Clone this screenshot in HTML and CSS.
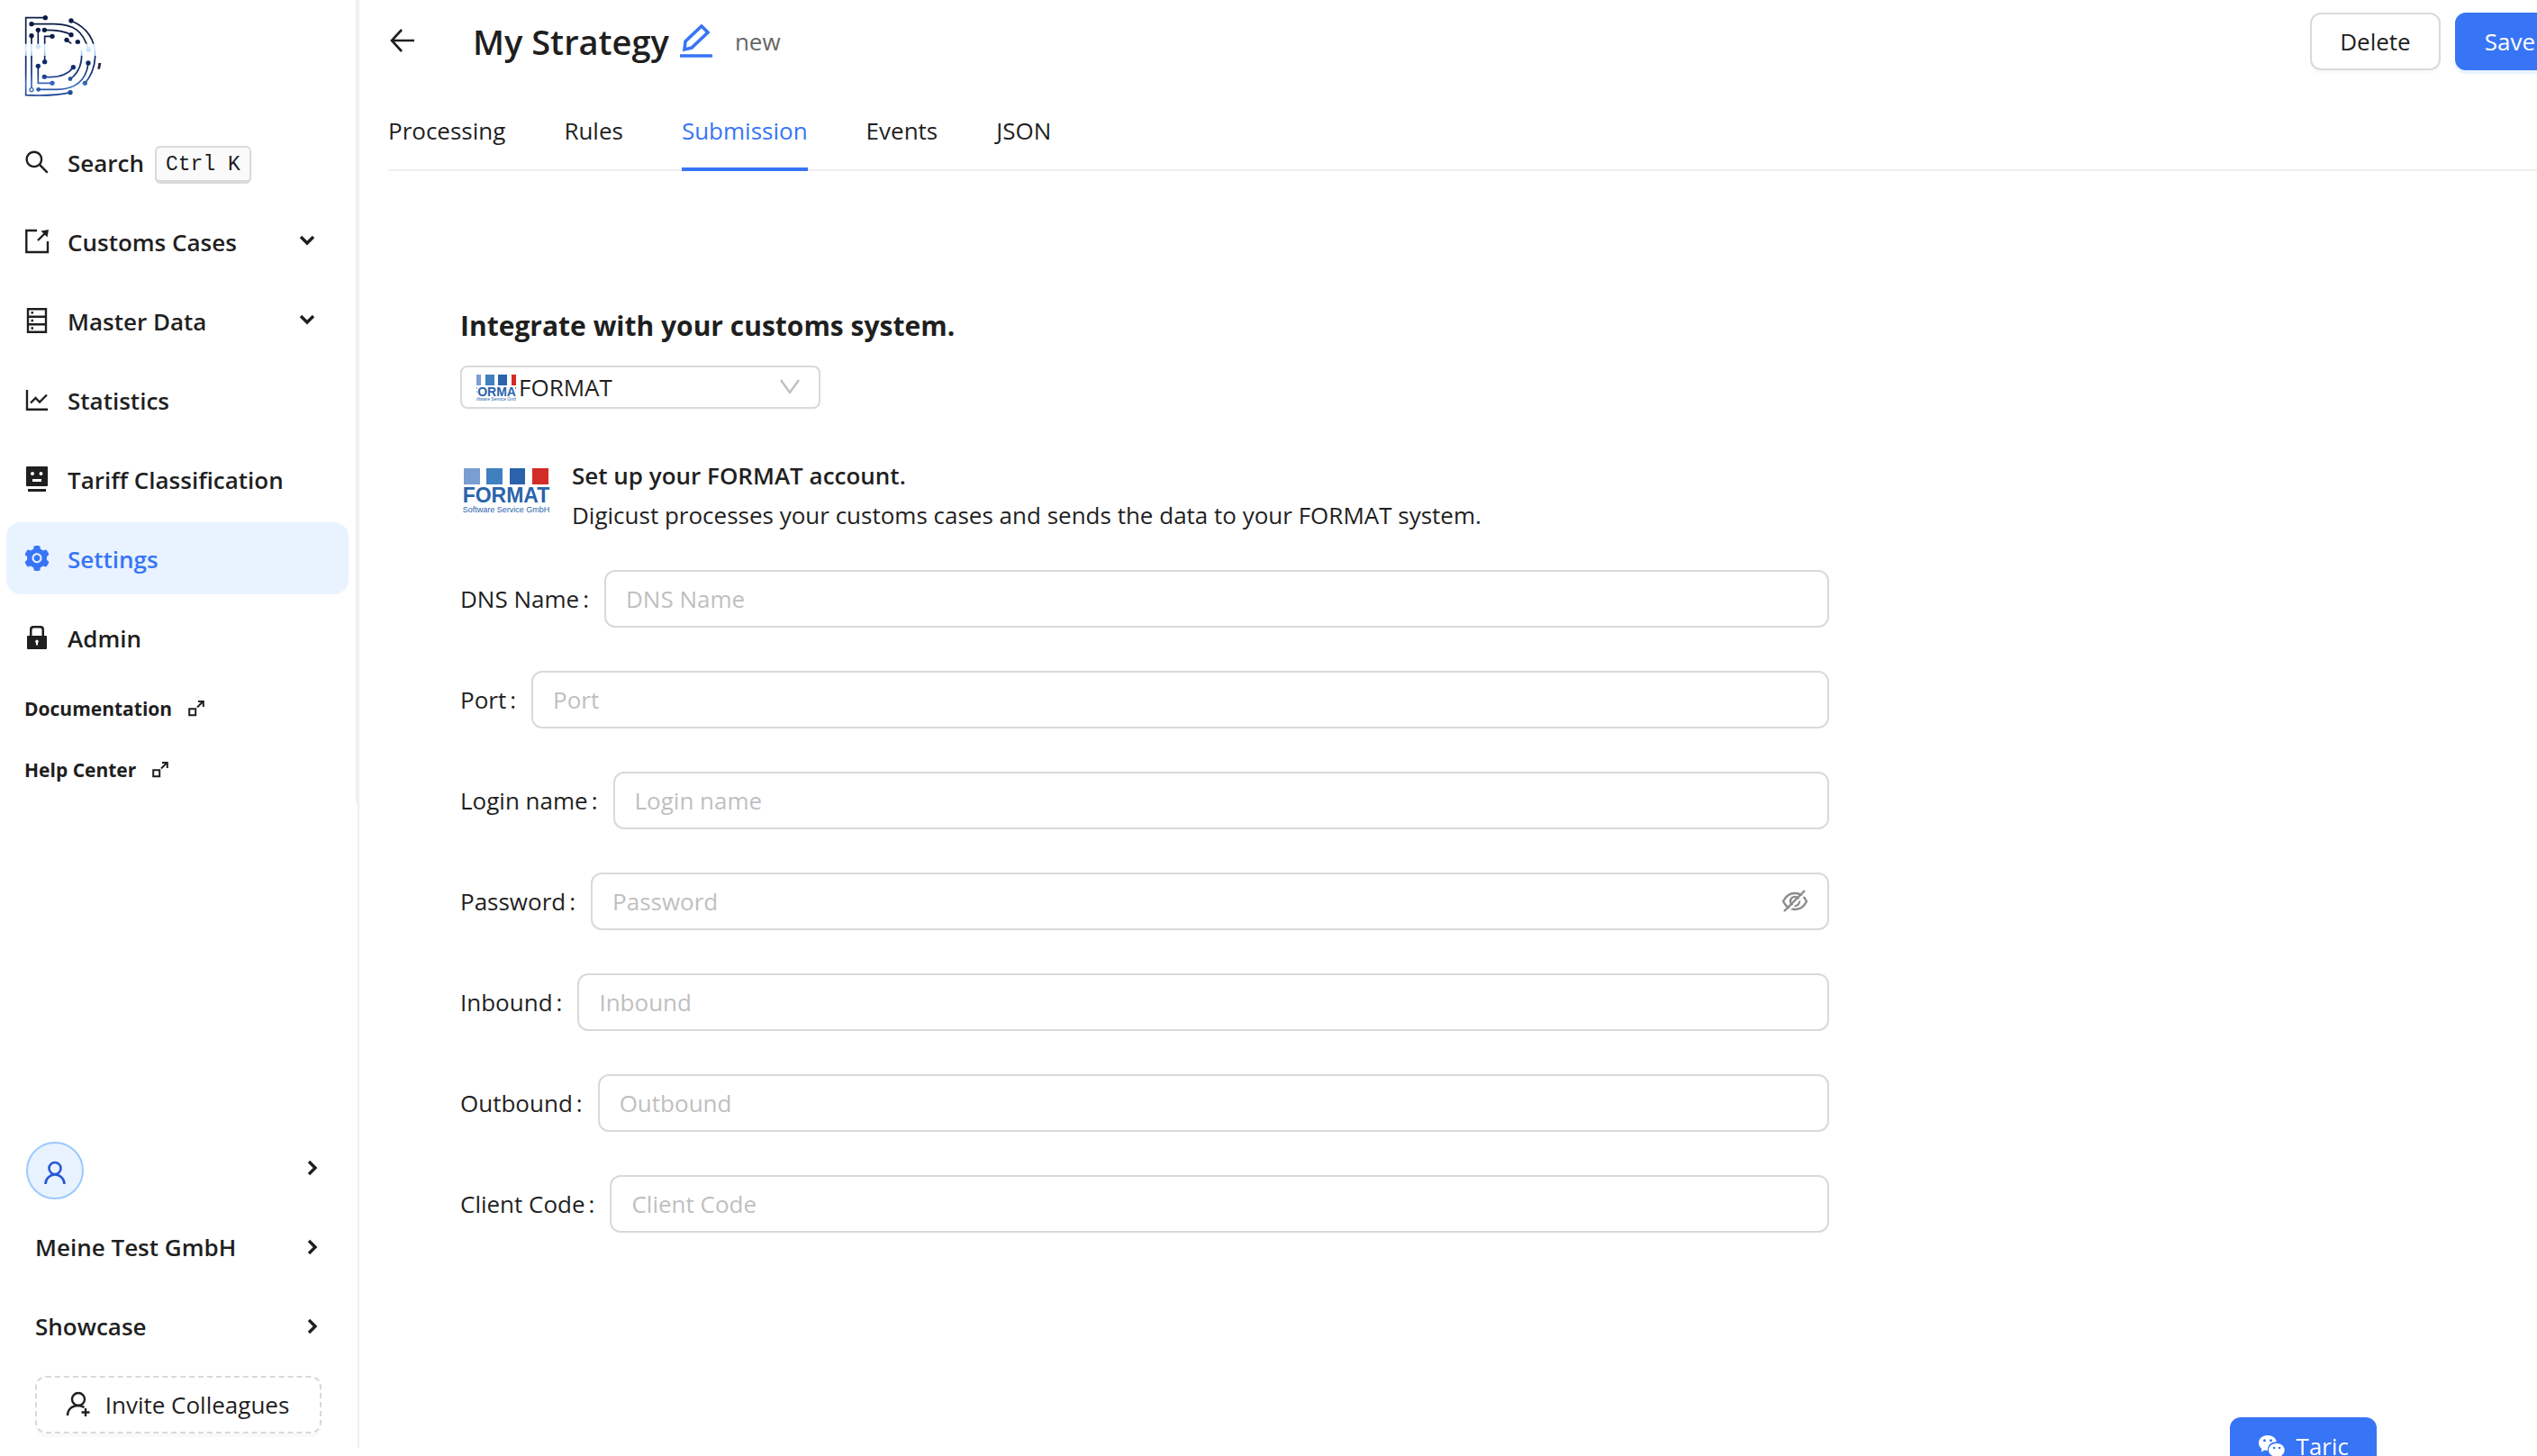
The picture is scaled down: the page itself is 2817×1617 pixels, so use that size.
FILE: index.html
```html
<!DOCTYPE html>
<html lang="en">
<head>
<meta charset="utf-8">
<title>My Strategy</title>
<link rel="stylesheet" href="styles.css">
</head>
<body>
<div class="layout">
  <aside class="sider">
    <div class="sider-top">
      <svg class="brand" viewBox="0 0 360 345" role="img" aria-label="Digicust">
        <defs>
          <linearGradient id="ink" gradientUnits="userSpaceOnUse" x1="0" y1="40" x2="0" y2="305">
            <stop offset="0" stop-color="#0b1b42"/><stop offset=".34" stop-color="#0a1c48"/>
            <stop offset=".345" stop-color="#c4e0fb"/><stop offset=".41" stop-color="#cfe8ff"/><stop offset=".49" stop-color="#8fc0f2"/>
            <stop offset=".5" stop-color="#0c2360"/><stop offset=".72" stop-color="#15357e"/>
            <stop offset=".85" stop-color="#3a6cc0"/><stop offset="1" stop-color="#173f8c"/>
          </linearGradient>
        </defs>
        <g fill="none" stroke="url(#ink)" stroke-width="5">
          <path d="M121 44H56V302C100 304 160 304 204 293"/>
          <path d="M75 65H150C215 66 245 85 265 150"/>
          <path d="M207 54C262 78 288 120 287 175C285 210 272 240 253 262"/>
          <path d="M75 104V284M97 85V140"/>
          <path d="M118 85C150 85 185 87 207 101"/>
          <path d="M144 106H119V190"/>
          <path d="M97 205V262H144"/>
          <path d="M118 241C165 245 195 235 214 209"/>
          <path d="M241 150C246 195 235 225 205 248"/>
          <path d="M264 195C258 250 225 285 150 283H98"/>
          <path d="M192 118L208 131"/>
        </g>
        <g fill="url(#ink)">
          <circle cx="121" cy="44" r="8"/><circle cx="75" cy="65" r="8"/><circle cx="97" cy="85" r="8"/><circle cx="118" cy="85" r="8"/>
          <circle cx="207" cy="54" r="8"/><circle cx="207" cy="101" r="8"/><circle cx="144" cy="106" r="8"/><circle cx="75" cy="104" r="8"/>
          <circle cx="192" cy="118" r="8"/><circle cx="229" cy="125" r="8"/><circle cx="97" cy="141" r="8"/><circle cx="265" cy="150" r="8"/>
          <circle cx="119" cy="191" r="8"/><circle cx="97" cy="205" r="8"/><circle cx="214" cy="209" r="8"/><circle cx="264" cy="195" r="8"/>
          <circle cx="118" cy="241" r="8"/><circle cx="144" cy="262" r="8"/><circle cx="204" cy="248" r="7"/><circle cx="253" cy="262" r="8"/>
          <circle cx="98" cy="283" r="7"/><circle cx="204" cy="293" r="8"/>
        </g>
        <circle cx="75" cy="284" r="6" fill="#fff" stroke="#3a6cc0" stroke-width="4"/>
        <path d="M298 195h9l-4 20h-8z" fill="#222a44"/>
      </svg>
      <nav class="menu">
        <a class="item" href="#"><svg class="ico" viewBox="0 0 1024 1024"><path d="M909.6 854.5L649.9 594.8C690.2 542.7 712 479 712 412c0-80.2-31.3-155.4-87.9-212.1-56.6-56.7-132-87.9-212.1-87.9s-155.5 31.3-212.1 87.9C143.2 256.5 112 331.8 112 412c0 80.1 31.3 155.5 87.9 212.1C256.5 680.8 331.8 712 412 712c67 0 130.6-21.8 182.7-62l259.7 259.6a8.2 8.2 0 0011.6 0l43.6-43.5a8.2 8.2 0 000-11.6zM570.4 570.4C528 612.7 471.8 636 412 636s-116-23.3-158.4-65.6C211.3 528 188 471.8 188 412s23.3-116.1 65.6-158.4C296 211.2 352.2 188 412 188s116.1 23.2 158.4 65.6S636 352.2 636 412s-23.3 116.1-65.6 158.4z"/></svg><span>Search</span><kbd>Ctrl K</kbd></a>
        <a class="item" href="#"><svg class="ico line" viewBox="0 0 32 32"><path d="M16 4H4.300V28H28V16M17 15L26 6"/><path class="solid" d="M20.500 4.500L29 3l-1.500 8.500z"/></svg><span>Customs Cases</span><svg class="chev" viewBox="0 0 20 20"><path d="M3 5l7 7 7-7"/></svg></a>
        <a class="item" href="#"><svg class="ico line" viewBox="0 0 32 32"><path d="M6 3.200h20v25.600H6zM6 11.700h20M6 20.300h20"/><path class="solid" d="M9.500 6h2.500v2.500H9.500zM9.500 14.700h2.500v2.500H9.500zM9.500 23.200h2.500v2.500H9.500z"/></svg><span>Master Data</span><svg class="chev" viewBox="0 0 20 20"><path d="M3 5l7 7 7-7"/></svg></a>
        <a class="item" href="#"><svg class="ico line" viewBox="0 0 32 32"><path d="M5 5v21.700h23M9 19.500l5.500-5.500 4.500 4.500 8-8"/></svg><span>Statistics</span></a>
        <a class="item" href="#"><svg class="ico" viewBox="0 0 32 32"><path fill-rule="evenodd" d="M5 2h22a1 1 0 011 1v20a1 1 0 01-1 1H5a1 1 0 01-1-1V3a1 1 0 011-1zM9 10a2 2 0 104 0 2 2 0 10-4 0zM18.500 10a2 2 0 104 0 2 2 0 10-4 0zM11 16v3h10v-3zM6 27h20v3H6z"/></svg><span>Tariff Classification</span></a>
        <a class="item active" href="#" aria-current="page"><svg class="ico" viewBox="0 0 1024 1024"><path d="M512.5 390.600c-29.900 0-57.900 11.600-79.100 32.800-21.100 21.200-32.800 49.200-32.800 79.100 0 29.900 11.700 57.900 32.800 79.100 21.200 21.100 49.200 32.800 79.100 32.800 29.900 0 57.900-11.700 79.100-32.800 21.100-21.200 32.800-49.200 32.800-79.100 0-29.900-11.700-57.900-32.800-79.100a110.960 110.960 0 00-79.100-32.800zm412.300 235.500l-65.400-55.900c3.100-19 4.700-38.400 4.700-57.700s-1.600-38.800-4.700-57.700l65.400-55.900a32.030 32.030 0 009.300-35.200l-.9-2.600a442.500 442.500 0 00-79.600-137.700l-1.800-2.100a32.120 32.120 0 00-35.100-9.500l-81.200 28.900c-30-24.600-63.400-44-99.600-57.500l-15.700-84.900a32.050 32.050 0 00-25.800-25.700l-2.700-.5c-52-9.400-106.800-9.400-158.800 0l-2.700.5a32.050 32.050 0 00-25.800 25.700l-15.800 85.300a353.440 353.440 0 00-98.900 57.300l-81.800-29.100a32 32 0 00-35.100 9.500l-1.800 2.100a445.930 445.930 0 00-79.600 137.700l-.9 2.600c-4.500 12.500-.8 26.500 9.300 35.200l66.200 56.500c-3.100 18.800-4.600 38-4.600 57 0 19.200 1.500 38.400 4.600 57l-66 56.500a32.030 32.030 0 00-9.300 35.200l.9 2.600c18.100 50.300 44.800 96.800 79.600 137.700l1.800 2.100a32.120 32.120 0 0035.100 9.500l81.800-29.100c29.800 24.500 63 43.900 98.900 57.300l15.800 85.300a32.050 32.050 0 0025.800 25.700l2.700.5a448.270 448.270 0 00158.800 0l2.700-.5a32.050 32.050 0 0025.800-25.700l15.700-84.900c36.200-13.600 69.600-32.900 99.600-57.500l81.200 28.900a32 32 0 0035.100-9.500l1.800-2.100c34.800-41.100 61.500-87.400 79.600-137.700l.9-2.600c4.300-12.400.6-26.300-9.500-35zm-412.300 52.200c-97.100 0-175.800-78.700-175.800-175.800s78.700-175.800 175.800-175.800 175.800 78.700 175.800 175.800-78.700 175.800-175.800 175.800z"/></svg><span>Settings</span></a>
        <a class="item" href="#"><svg class="ico" viewBox="0 0 32 32"><path fill-rule="evenodd" d="M26 14h-2V7a4 4 0 00-4-4h-8a4 4 0 00-4 4v7H6a1 1 0 00-1 1v13a1 1 0 001 1h20a1 1 0 001-1V15a1 1 0 00-1-1zM17 22v2.500h-2V22a1.800 1.800 0 112 0zM21.500 14h-11V7.500a2 2 0 012-2h7a2 2 0 012 2z"/></svg><span>Admin</span></a>
      </nav>
      <nav class="links">
        <a class="link" href="#"><span>Documentation</span><svg class="ext" viewBox="0 0 20 20"><path d="M2.200 10.200h7v7h-7zM11 8.500L17 2.500M12 2h5.800v6"/></svg></a>
        <a class="link" href="#"><span>Help Center</span><svg class="ext" viewBox="0 0 20 20"><path d="M2.200 10.200h7v7h-7zM11 8.500L17 2.500M12 2h5.800v6"/></svg></a>
      </nav>
    </div>
    <div class="sider-bottom">
      <a class="row row-user" href="#" aria-label="Account"><span class="avatar"><svg viewBox="0 0 32 32"><circle cx="16" cy="9.500" r="6.500"/><path d="M5.500 27a10.500 10.500 0 0121 0"/></svg></span><svg class="chev" viewBox="0 0 20 20"><path d="M6 3l7 7-7 7"/></svg></a>
      <a class="row" href="#"><span>Meine Test GmbH</span><svg class="chev" viewBox="0 0 20 20"><path d="M6 3l7 7-7 7"/></svg></a>
      <a class="row" href="#"><span>Showcase</span><svg class="chev" viewBox="0 0 20 20"><path d="M6 3l7 7-7 7"/></svg></a>
      <button class="btn btn-dashed" type="button"><svg class="ico line" viewBox="0 0 32 32"><circle cx="16" cy="10" r="7"/><path d="M4 28c0-6 4-11 12-11 3 0 5 1 6.500 2M24 20v9M19.500 24.500h9"/></svg>Invite Colleagues</button>
    </div>
  </aside>

  <main class="main">
    <header class="header">
      <button class="back" type="button" aria-label="Back"><svg viewBox="0 0 32 32"><path d="M29 15H4M15 3L4 15l11 12"/></svg></button>
      <h1>My Strategy</h1>
      <button class="edit" type="button" aria-label="Edit name"><svg viewBox="0 0 40 40"><path d="M7 29l1-9L26 3l7 7-18 17zM2 36h36"/></svg></button>
      <span class="tag">new</span>
      <div class="actions"><button class="btn" type="button">Delete</button><button class="btn btn-primary" type="button">Save</button></div>
    </header>
    <nav class="tabs">
      <a href="#">Processing</a><a href="#">Rules</a><a class="current" href="#" aria-current="page">Submission</a><a href="#">Events</a><a href="#">JSON</a>
    </nav>
    <form class="content">
      <h2><label for="system">Integrate with your customs system.</label></h2>
      <div class="select">
        <svg class="mini" viewBox="0 0 44 32"><path fill="#7b9ed1" d="M0 2h5v12H0z"/><path fill="#4080c0" d="M10 2h10v12H10z"/><path fill="#2a63ab" d="M24 2h10v12H24z"/><path fill="#d12d26" d="M39 2h5v12h-5z"/><text x="22" y="26" class="mini-name">FORMAT</text><text x="22" y="31" class="mini-sub">Software Service GmbH</text></svg>
        <select id="system"><option>FORMAT</option></select>
        <svg class="caret" viewBox="0 0 24 24"><path d="M2 4l10 14L22 4"/></svg>
      </div>
      <section class="intro">
        <svg class="logo" viewBox="0 0 104 60" role="img" aria-label="FORMAT Software Service GmbH"><path fill="#7b9ed1" d="M4 6h18v18H4z"/><path fill="#4080c0" d="M29 6h18v18H29z"/><path fill="#2a63ab" d="M55 6h17v18H55z"/><path fill="#d12d26" d="M80 6h18v18H80z"/><text x="51" y="44" class="logo-name">FORMAT</text><text x="51" y="55" class="logo-sub">Software Service GmbH</text></svg>
        <div><h3>Set up your FORMAT account.</h3><p>Digicust processes your customs cases and sends the data to your FORMAT system.</p></div>
      </section>
      <div class="field"><label for="dns">DNS Name</label><input id="dns" type="text" placeholder="DNS Name"></div>
      <div class="field"><label for="port">Port</label><input id="port" type="text" placeholder="Port"></div>
      <div class="field"><label for="login">Login name</label><input id="login" type="text" placeholder="Login name"></div>
      <div class="field"><label for="pass">Password</label><div class="password"><input id="pass" type="password" placeholder="Password"><button type="button" aria-label="Show password"><svg viewBox="0 0 32 32"><path d="M3 16c3-6 7-9 13-9s10 3 13 9c-3 6-7 9-13 9S6 22 3 16z"/><circle cx="16" cy="16" r="5"/><path class="gap" d="M6 29L29 6"/><path d="M4 27L27 4"/></svg></button></div></div>
      <div class="field"><label for="inbound">Inbound</label><input id="inbound" type="text" placeholder="Inbound"></div>
      <div class="field"><label for="outbound">Outbound</label><input id="outbound" type="text" placeholder="Outbound"></div>
      <div class="field"><label for="client">Client Code</label><input id="client" type="text" placeholder="Client Code"></div>
    </form>
  </main>
</div>
<button class="btn btn-primary chat" type="button"><svg viewBox="0 0 32 32"><path fill="#fff" fill-rule="evenodd" d="M12 4C6 4 2 7.800 2 12.500c0 2.700 1.300 5 3.500 6.500l-.8 3.500 4-2c1.200.3 2 .4 3.300.4C11.500 15 16 11 22 11.300 21 7 17 4 12 4zM7 9.800a1.500 1.500 0 103 0 1.500 1.500 0 10-3 0zM14 9.800a1.500 1.500 0 103 0 1.500 1.500 0 10-3 0zM22 13c-5 0-9 3.200-9 7.400s4 7.400 9 7.400c1 0 2-.2 3-.4l3 1.500-.7-2.500c2.200-1.500 3.400-3.600 3.400-6 0-4.200-4-7.400-8.700-7.400zM17.800 18a1.300 1.300 0 102.600 0 1.300 1.300 0 10-2.600 0zM23.800 18a1.300 1.300 0 102.600 0 1.300 1.300 0 10-2.600 0z"/></svg>Taric</button>
</body>
</html>
```
FILE: styles.css
```css
:root {
  --text: #1f1f1f;
  --primary: #3875f6;
  --border: #d9d9d9;
  --split: #f0f0f0;
}
* { box-sizing: border-box; }
body {
  margin: 0;
  height: 100vh;
  overflow: hidden;
  background: #fff;
  color: var(--text);
  font: 26px/44px "Open Sans", "Noto Sans", sans-serif;
}
a { color: inherit; text-decoration: none; }
h1, h2, h3, p { margin: 0; }
button, input, select { font: inherit; color: inherit; }
svg { display: block; flex: none; }

.layout { display: flex; height: 100%; }

/* Sidebar */
.sider {
  display: flex;
  flex-direction: column;
  justify-content: space-between;
  flex: none;
  width: 399px;
  margin-bottom: 9px;
  border-right: 2px solid var(--split);
}
.sider-top {
  height: 892px;
  padding: 5px 8px 0 7px;
  border-right: 2px solid var(--split);
}
.brand { width: 120px; height: 115px; margin-left: 3px; }
.menu { display: flex; flex-direction: column; gap: 8px; margin-top: 20px; }
.item {
  display: flex;
  align-items: center;
  height: 80px;
  padding: 0 36px 0 18px;
  border-radius: 16px;
  font-weight: 600;
}
.item > span { margin-left: 18px; padding-top: 1px; }
.item.active { background: #e8f3ff; color: var(--primary); }
.ico { width: 32px; height: 32px; fill: currentColor; }
.line { fill: none; stroke: currentColor; stroke-width: 2.4; }
.line .solid { fill: currentColor; stroke: none; }
.chev { width: 20px; height: 20px; margin-left: auto; fill: none; stroke: currentColor; stroke-width: 3.4; }
kbd {
  margin: 6px 0 0 12px;
  padding: 2px 10px 0;
  border: 2px solid var(--border);
  border-bottom-width: 4px;
  border-radius: 6px;
  background: #fafafa;
  font: 23px/34px "Liberation Mono", monospace;
}
.links { display: flex; flex-direction: column; padding: 5px 0 0 20px; }
.link { display: flex; align-items: center; height: 68px; gap: 17px; font-size: 21px; font-weight: 700; }
.ext { width: 20px; height: 20px; fill: none; stroke: currentColor; stroke-width: 2; }

.sider-bottom { padding: 0 40px 16px 39px; }
.row { display: flex; align-items: center; height: 88px; font-weight: 600; }
.row-user { margin-left: -10px; }
.avatar {
  display: grid;
  place-items: center;
  width: 64px;
  height: 64px;
  margin-top: 5px;
  border: 2px solid #9cc9ff;
  border-radius: 50%;
  background: #e8f3ff;
}
.avatar svg { width: 32px; height: 32px; margin-top: 8px; fill: none; stroke: #2858d8; stroke-width: 2.6; }

.btn {
  display: inline-flex;
  align-items: center;
  justify-content: center;
  height: 64px;
  padding: 0 31px;
  border: 2px solid var(--border);
  border-radius: 12px;
  background: #fff;
  box-shadow: 0 4px 0 rgba(0, 0, 0, .02);
  white-space: nowrap;
}
.btn-primary { border-color: var(--primary); background: var(--primary); color: #fff; box-shadow: 0 4px 0 #e8f3ff; }
.btn-dashed { width: 100%; gap: 14px; margin-top: 11px; padding: 0 4px 0 0; border-style: dashed; }

/* Page header */
.main { flex: 1; min-width: 0; padding-left: 32px; overflow: hidden; }
.header { display: flex; align-items: center; height: 92px; margin-right: -31px; }
.back, .edit { padding: 0; border: 0; background: none; }
.back svg { width: 32px; height: 32px; fill: none; stroke: currentColor; stroke-width: 2.6; }
h1 { margin-left: 62px; font-size: 38px; font-weight: 600; }
.edit { margin-left: 10px; }
.edit svg { width: 40px; height: 40px; fill: none; stroke: var(--primary); stroke-width: 3.6; }
.tag { margin-left: 23px; color: #666; }
.actions { display: flex; gap: 16px; margin-left: auto; }
.tabs { display: flex; gap: 65px; height: 98px; border-bottom: 2px solid var(--split); }
.tabs a { height: 98px; padding-top: 31px; }
.tabs .current { border-bottom: 4px solid var(--primary); color: var(--primary); }

/* Submission form */
.content { max-width: 1600px; padding: 150px 0 0 80px; }
h2 { font-size: 30px; font-weight: 700; }
.select { display: flex; align-items: center; position: relative; width: 400px; height: 48px; margin-top: 22px; padding: 0 20px 0 16px; border: 2px solid var(--border); border-radius: 8px; }
.select select { flex: 1; height: 44px; padding: 0 0 2px 3px; border: 0; outline: 0; background: none; appearance: none; }
.mini { width: 44px; height: 32px; overflow: hidden; }
.mini text, .logo text { fill: #2a63ab; text-anchor: middle; font-family: "Liberation Sans", sans-serif; }
.mini .mini-name { font-size: 14px; font-weight: 700; }
.mini .mini-sub { font-size: 5px; }
.caret { width: 24px; height: 24px; fill: none; stroke: #bfbfbf; stroke-width: 2.4; }
.intro { display: flex; gap: 20px; margin: 52px 0 39px; }
.logo { width: 104px; height: 60px; margin-top: 8px; }
.logo .logo-name { font-size: 23px; font-weight: 700; }
.logo .logo-sub { font-size: 9px; }
h3 { font-size: 26px; font-weight: 600; }
.field { display: flex; align-items: center; margin-bottom: 48px; }
.field label { margin-right: 17px; white-space: nowrap; }
.field label::after { content: ":"; margin-left: 4px; }
.field input { flex: 1; width: 100%; min-width: 0; height: 64px; padding: 0 22px; border: 2px solid var(--border); border-radius: 12px; background: #fff; }
.field input::placeholder { color: #bfbfbf; opacity: 1; }
.password { display: flex; flex: 1; position: relative; }
.password button { position: absolute; right: 22px; top: 16px; padding: 0; border: 0; background: none; }
.password svg { width: 32px; height: 32px; fill: none; stroke: #8c8c8c; stroke-width: 2.4; }
.password .gap { stroke: #fff; stroke-width: 2.4; }

.chat { position: fixed; right: 178px; bottom: -21px; gap: 12px; padding: 0 29px 0 28px; }
.chat svg { width: 32px; height: 32px; }
```
